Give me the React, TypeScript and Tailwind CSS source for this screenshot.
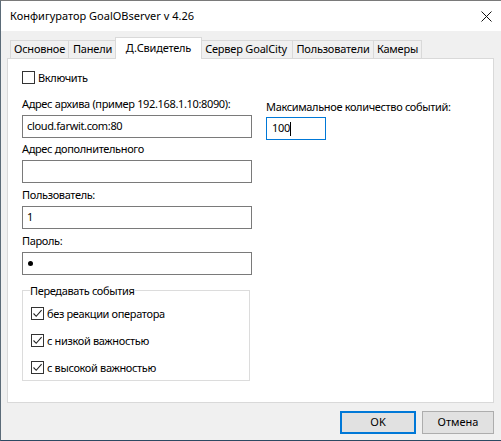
import React from "react";

function CheckBox({ checked, label }: { checked?: boolean; label: string }) {
  return (
    <div className="flex h-[13px] items-center">
      <span className="flex h-[13px] w-[13px] shrink-0 items-center justify-center border border-[#333333] bg-white">
        {checked && (
          <svg width="11" height="11" viewBox="0 0 11 11" fill="none">
            <path d="M1.5 5.5 L4.2 8.3 L9.6 2.2" stroke="#222" strokeWidth="1.1" />
          </svg>
        )}
      </span>
      <span className="ml-[3px] whitespace-nowrap leading-[15px]">{label}</span>
    </div>
  );
}

function Field({ label, value, children }: { label: string; value?: string; children?: React.ReactNode }) {
  return (
    <>
      <div className="h-[15px] whitespace-nowrap leading-[15px]">{label}</div>
      <div className="mt-[4px] flex h-[23px] w-[230px] items-center border border-[#7a7a7a] bg-white pl-[4px]">
        {value}
        {children}
      </div>
    </>
  );
}

const tabs = [
  { name: "Основное", w: "w-[59px]" },
  { name: "Панели", w: "w-[48px]" },
  { name: "Д.Свидетель", w: "w-[87px]" },
  { name: "Сервер GoalCity", w: "w-[93px]" },
  { name: "Пользователи", w: "w-[81px]" },
  { name: "Камеры", w: "w-[48px]" },
];

export default function App() {
  return (
    <div className="flex h-[441px] w-[501px] flex-col border-t border-l border-b border-t-[#7a7a7a] border-l-[#5b6b78] border-b-[#2c4a63] bg-[#f0f0f0] font-['Noto_Sans',sans-serif] text-[11px] tracking-[-0.35px] text-black">
      {/* title bar */}
      <div className="flex h-[30px] shrink-0 items-center bg-white pl-[9px] pr-[9px] tracking-normal">
        <span className="flex-1">Конфигуратор GoalOBserver v 4.26</span>
        <svg width="11" height="11" viewBox="0 0 11 11">
          <path d="M0.5 0.5 L10.5 10.5 M10.5 0.5 L0.5 10.5" stroke="#111" strokeWidth="1" />
        </svg>
      </div>

      {/* tabs */}
      <div className="mt-[7px] flex h-[20px] items-end pl-[9px] tracking-[-0.2px]">
        {tabs.map((t, i) =>
          i === 2 ? (
            <div
              key={t.name}
              className={`relative z-10 -mx-[2px] -mb-px flex h-[22px] justify-center border-x border-t border-[#d9d9d9] bg-white pt-[2px] ${t.w}`}
            >
              {t.name}
            </div>
          ) : (
            <div
              key={t.name}
              className={`flex h-[18px] items-center justify-center whitespace-nowrap border-t border-r border-[#d9d9d9] bg-[#f0f0f0] ${t.w} ${i === 0 ? "border-l" : ""}`}
            >
              {t.name}
            </div>
          )
        )}
      </div>

      {/* tab page */}
      <div className="ml-[6px] flex h-[345px] w-[487px] border border-[#d9d9d9] bg-white pl-[14px]">
        <div className="flex w-[230px] flex-col pt-[12px]">
          <CheckBox label="Включить" />
          <div className="mt-[12px]" />
          <Field label="Адрес архива (пример 192.168.1.10:8090):" value="cloud.farwit.com:80" />
          <div className="mt-[3px]" />
          <Field label="Адрес дополнительного" />
          <div className="mt-[4px]" />
          <Field label="Пользователь:" value="1" />
          <div className="mt-[4px]" />
          <Field label="Пароль:">
            <span className="ml-[1px] h-[5px] w-[5px] rounded-full bg-black" />
          </Field>

          <fieldset className="mt-[8px] w-[228px] border border-[#dcdcdc] pb-[6px] pl-[8px]">
            <legend className="-ml-[1px] px-0 leading-[15px]">Передавать события</legend>
            <div className="mt-[9px] flex flex-col gap-[14px]">
              <CheckBox checked label="без реакции оператора" />
              <CheckBox checked label="с низкой важностью" />
              <CheckBox checked label="с высокой важностью" />
            </div>
          </fieldset>
        </div>

        <div className="ml-[14px] flex flex-col pt-[40px]">
          <div className="h-[15px] whitespace-nowrap leading-[15px]">Максимальное количество событий:</div>
          <div className="mt-[3px] flex h-[23px] w-[60px] items-center border border-[#0078d7] bg-white pl-[5px]">
            100
            <span className="h-[14px] w-px bg-black" />
          </div>
        </div>
      </div>

      {/* buttons */}
      <div className="mt-[8px] flex justify-end gap-[6px] pr-[7px] tracking-normal">
        <button className="h-[23px] w-[76px] border-2 border-[#0078d7] bg-[#e1e1e1]">OK</button>
        <button className="h-[23px] w-[72px] border border-[#adadad] bg-[#e1e1e1]">Отмена</button>
      </div>
    </div>
  );
}
